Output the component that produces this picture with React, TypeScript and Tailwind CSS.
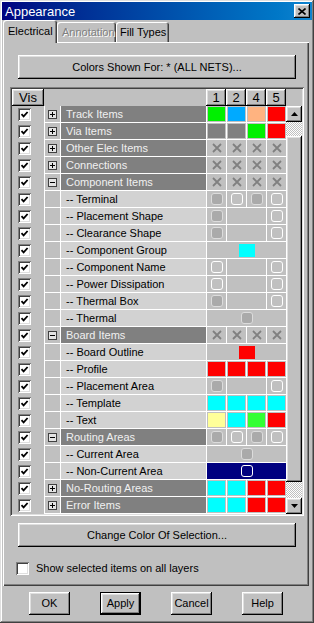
import React from 'react';

type Row = { name: string; g?: '+' | '-'; cells: [number, string][] };

const X4: [number, string][] = [[1, 'X'], [1, 'X'], [1, 'X'], [1, 'X']];
const f = (c: string): [number, string] => [1, 'F' + c];

const ROWS: Row[] = [
  { name: 'Track Items', g: '+', cells: [f('#00f000'), f('#00aaff'), f('#ffb380'), f('#ff0000')] },
  { name: 'Via Items', g: '+', cells: [f('#808080'), f('#808080'), f('#00f000'), f('#ff0000')] },
  { name: 'Other Elec Items', g: '+', cells: X4 },
  { name: 'Connections', g: '+', cells: X4 },
  { name: 'Component Items', g: '-', cells: X4 },
  { name: '-- Terminal', cells: [[1, 'D'], [1, 'B'], [1, 'D'], [1, 'B']] },
  { name: '-- Placement Shape', cells: [[1, 'D'], [2, '-'], [1, 'B']] },
  { name: '-- Clearance Shape', cells: [[1, 'D'], [2, '-'], [1, 'B']] },
  { name: '-- Component Group', cells: [[4, 'S#00ffff']] },
  { name: '-- Component Name', cells: [[1, 'B'], [2, '-'], [1, 'B']] },
  { name: '-- Power Dissipation', cells: [[1, 'B'], [2, '-'], [1, 'B']] },
  { name: '-- Thermal Box', cells: [[1, 'D'], [2, '-'], [1, 'B']] },
  { name: '-- Thermal', cells: [[4, 'D']] },
  { name: 'Board Items', g: '-', cells: X4 },
  { name: '-- Board Outline', cells: [[4, 'S#ff0000']] },
  { name: '-- Profile', cells: [f('#ff0000'), f('#ff0000'), f('#ff0000'), f('#ff0000')] },
  { name: '-- Placement Area', cells: [[1, 'D'], [2, '-'], [1, 'B']] },
  { name: '-- Template', cells: [f('#00ffff'), f('#00ffff'), f('#00ffff'), f('#00ffff')] },
  { name: '-- Text', cells: [f('#ffff99'), f('#00ffff'), f('#33ff33'), f('#ff0000')] },
  { name: 'Routing Areas', g: '-', cells: [[1, 'D'], [1, 'B'], [1, 'D'], [1, 'B']] },
  { name: '-- Current Area', cells: [[4, 'D']] },
  { name: '-- Non-Current Area', cells: [[4, 'N']] },
  { name: 'No-Routing Areas', g: '+', cells: [f('#00ffff'), f('#00ffff'), f('#ff0000'), f('#ff0000')] },
  { name: 'Error Items', g: '+', cells: [f('#00ffff'), f('#00ffff'), f('#ff0000'), f('#ff0000')] },
];

const raised =
  'shadow-[inset_-1px_-1px_0_#000,inset_1px_1px_0_#fff,inset_-2px_-2px_0_#808080,inset_2px_2px_0_#dfdfdf]';
const sunken =
  'shadow-[inset_1px_1px_0_#808080,inset_-1px_-1px_0_#fff,inset_2px_2px_0_#404040,inset_-2px_-2px_0_#dfdfdf]';

const spanW: Record<number, string> = { 1: 'w-[20px]', 2: 'w-[40px]', 4: 'w-[80px]' };

const Check = ({ on = true }: { on?: boolean }) => (
  <div className={`w-[13px] h-[13px] bg-white ${sunken} flex items-center justify-center`}>
    {on && (
      <svg width="9" height="9" viewBox="0 0 9 9">
        <path d="M1.5 4.2 L3.6 6.4 L7.6 2" fill="none" stroke="#000" strokeWidth="1.8" />
      </svg>
    )}
  </div>
);

const Box = ({ dim, light }: { dim?: boolean; light?: boolean }) => (
  <div
    className={`w-[12px] h-[12px] rounded-[3px] border ${
      dim ? 'border-[#dcdcdc] bg-[#aaaaaa]' : light ? 'border-white' : 'border-white'
    }`}
  />
);

const ColorCell = ({ span, code }: { span: number; code: string }) => {
  const t = code[0];
  const w = spanW[span];
  if (t === 'F')
    return (
      <div className={`${w} h-full border-l border-white p-px`}>
        <div className="w-full h-full" style={{ background: code.slice(1) }} />
      </div>
    );
  if (t === 'N')
    return (
      <div className={`${w} h-full border-l border-white bg-[#000080] flex items-center justify-center`}>
        <Box light />
      </div>
    );
  return (
    <div className={`${w} h-full border-l border-white flex items-center justify-center`}>
      {t === 'X' && (
        <svg width="10" height="10" viewBox="0 0 10 10">
          <path d="M1 1 L9 9 M9 1 L1 9" stroke="#808080" strokeWidth="1.8" />
        </svg>
      )}
      {t === 'B' && <Box />}
      {t === 'D' && <Box dim />}
      {t === 'S' && <div className="w-[16px] h-[13px]" style={{ background: code.slice(1) }} />}
    </div>
  );
};

const Expander = ({ g }: { g: '+' | '-' }) => (
  <div className="w-[9px] h-[9px] border border-[#404040] bg-[#e4e4e4] flex items-center justify-center">
    <svg width="5" height="5" viewBox="0 0 5 5">
      <path d={g === '+' ? 'M0 2.5 H5 M2.5 0 V5' : 'M0 2.5 H5'} stroke="#000" strokeWidth="1" />
    </svg>
  </div>
);

const GridRow = ({ row }: { row: Row }) => (
  <div className="flex h-[17px]">
    <div className="w-[32px] h-full flex items-center pl-[6px]">
      <Check />
    </div>
    <div className="flex w-[242px] h-full border-b border-white">
      <div className="w-[16px] h-full border-l border-white flex items-center justify-center">
        {row.g && <Expander g={row.g} />}
      </div>
      <div
        className={`w-[146px] h-full border-l border-white pl-[5px] flex items-center whitespace-nowrap overflow-hidden ${
          row.g ? 'bg-[#808080] text-[#f0f0f0]' : 'bg-[#d2d2d2] text-black'
        }`}
      >
        {row.name}
      </div>
      {row.cells.map(([s, c], i) => (
        <ColorCell key={i} span={s} code={c} />
      ))}
    </div>
  </div>
);

const Arrow = ({ up }: { up?: boolean }) => (
  <div className={`w-[16px] h-[16px] bg-[#c0c0c0] ${raised} flex items-center justify-center`}>
    <svg width="7" height="4" viewBox="0 0 7 4">
      <path d={up ? 'M0 4 L3.5 0 L7 4 Z' : 'M0 0 L3.5 4 L7 0 Z'} fill="#000" />
    </svg>
  </div>
);

const dither =
  'bg-[image:repeating-conic-gradient(#ffffff_0%_25%,#c0c0c0_0%_50%)] bg-[length:2px_2px]';

const Btn = ({ children, className = '' }: { children: React.ReactNode; className?: string }) => (
  <div className={`bg-[#c0c0c0] ${raised} flex items-center justify-center ${className}`}>{children}</div>
);

export default function App() {
  return (
    <div className="w-[314px] h-[623px] bg-[#c0c0c0] p-[2px] shadow-[inset_-1px_-1px_0_#404040,inset_1px_1px_0_#dfdfdf,inset_-2px_-2px_0_#808080,inset_2px_2px_0_#fff] flex flex-col font-['Liberation_Sans',Arial,sans-serif] text-[11px] text-black leading-none select-none">
      {/* title bar */}
      <div className="h-[18px] bg-linear-to-r from-[#000080] to-[#1084d0] flex items-center justify-between pl-[3px] pr-[2px]">
        <span className="text-[13px] text-white">Appearance</span>
        <div className={`w-[16px] h-[14px] bg-[#c0c0c0] ${raised} flex items-center justify-center`}>
          <svg width="8" height="7" viewBox="0 0 8 7">
            <path d="M0.5 0.5 L7.5 6.5 M7.5 0.5 L0.5 6.5" stroke="#000" strokeWidth="1.6" />
          </svg>
        </div>
      </div>

      {/* tabs */}
      <div className="flex items-end h-[22px] pl-[1px]">
        <div className="relative z-10 -mb-px w-[54px] h-[23px] bg-[#c0c0c0] rounded-t-[3px] shadow-[inset_1px_1px_0_#fff,inset_-1px_0_0_#404040,inset_-2px_0_0_#808080] flex items-center pl-[5px]">
          Electrical
        </div>
        <div className="w-[59px] h-[20px] rounded-t-[3px] shadow-[inset_1px_1px_0_#fff,inset_-1px_0_0_#404040,inset_-2px_0_0_#808080] flex items-center pl-[5px] text-[#808080] [text-shadow:1px_1px_0_#fff]">
          Annotation
        </div>
        <div className="w-[53px] h-[20px] rounded-t-[3px] shadow-[inset_1px_1px_0_#fff,inset_-1px_0_0_#404040,inset_-2px_0_0_#808080] flex items-center pl-[4px]">
          Fill Types
        </div>
      </div>

      {/* panel */}
      <div className="ml-[1px] w-[306px] h-[544px] shadow-[inset_1px_1px_0_#fff,inset_-1px_-1px_0_#404040,inset_-2px_-2px_0_#808080] flex flex-col">
        <Btn className="ml-[15px] mt-[13px] w-[278px] h-[24px]">Colors Shown For: * (ALL NETS)...</Btn>

        <div className={`ml-[7px] mt-[8px] w-[294px] h-[429px] p-[2px] ${sunken} flex flex-col`}>
          <div className="flex h-[17px]">
            <div className={`w-[32px] h-full ${raised} flex items-center justify-center text-[13px]`}>Vis</div>
            <div className="w-[162px] h-full" />
            {['1', '2', '4', '5'].map((n) => (
              <div key={n} className={`w-[20px] h-full ${raised} flex items-center justify-center text-[13px]`}>
                {n}
              </div>
            ))}
            <div className="w-[16px] h-full" />
          </div>
          <div className="flex">
            <div className="w-[274px] flex flex-col">
              {ROWS.map((r) => (
                <GridRow key={r.name} row={r} />
              ))}
            </div>
            <div className="w-[16px] flex flex-col">
              <Arrow up />
              <div className={`h-[14px] ${dither}`} />
              <div className={`h-[346px] bg-[#c0c0c0] ${raised}`} />
              <div className={`h-[16px] ${dither}`} />
              <Arrow />
            </div>
          </div>
        </div>

        <Btn className="ml-[15px] mt-[7px] w-[278px] h-[24px]">Change Color Of Selection...</Btn>

        <div className="ml-[13px] mt-[15px] flex items-center gap-[7px]">
          <Check on={false} />
          <span>Show selected items on all layers</span>
        </div>
      </div>

      {/* dialog buttons */}
      <div className="flex mt-[6px] pl-[27px] gap-[30px]">
        <Btn className="w-[41px] h-[23px]">OK</Btn>
        <div className="w-[41px] h-[23px] border border-black">
          <Btn className="w-full h-full">Apply</Btn>
        </div>
        <Btn className="w-[41px] h-[23px]">Cancel</Btn>
        <Btn className="w-[41px] h-[23px]">Help</Btn>
      </div>
    </div>
  );
}
